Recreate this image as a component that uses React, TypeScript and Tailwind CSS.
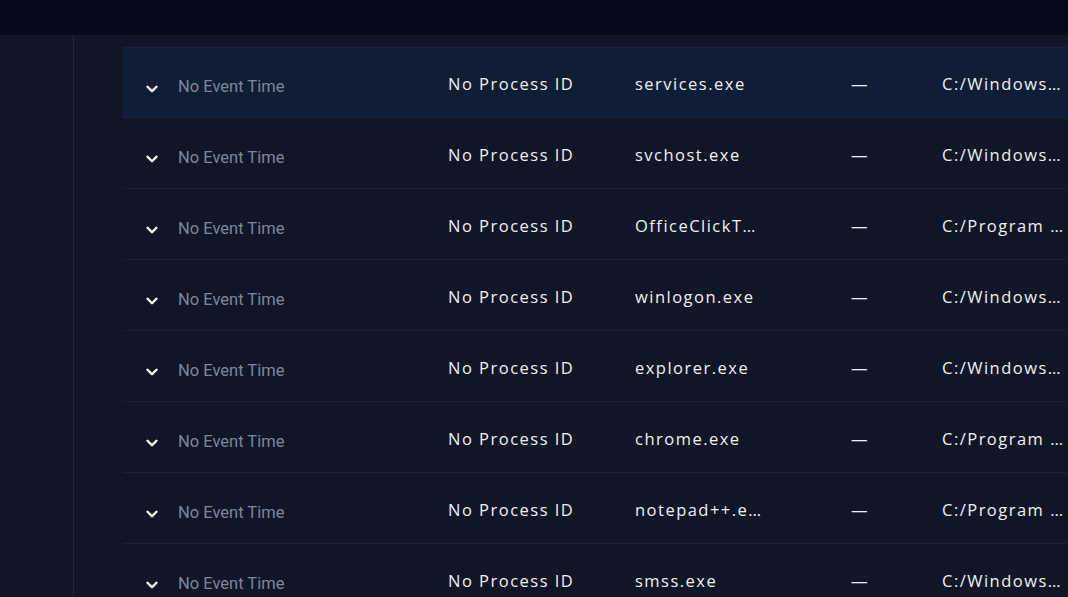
import { ChevronDown } from "lucide-react";

const rows = [
  { name: "services.exe", path: "C:/Windows/System32/services.exe" },
  { name: "svchost.exe", path: "C:/Windows/System32/svchost.exe" },
  { name: "OfficeClickToRun.exe", path: "C:/Program Files/Common Files/OfficeClickToRun.exe" },
  { name: "winlogon.exe", path: "C:/Windows/System32/winlogon.exe" },
  { name: "explorer.exe", path: "C:/Windows/explorer.exe" },
  { name: "chrome.exe", path: "C:/Program Files/Google/Chrome/chrome.exe" },
  { name: "notepad++.exe", path: "C:/Program Files/Notepad++/notepad++.exe" },
  { name: "smss.exe", path: "C:/Windows/System32/smss.exe" },
];

const wide = "font-['Open_Sans',sans-serif] font-medium text-[16.5px] tracking-[0.09em] text-[#eef0f5]";

export default function App() {
  return (
    <div className="h-[597px] w-[1068px] overflow-hidden bg-[#0f1726] flex flex-col">
      {/* Top bar */}
      <div className="h-[35px] shrink-0 bg-[#060a19]" />

      <div className="flex flex-1 min-h-0">
        {/* Sidebar */}
        <aside className="w-[74px] shrink-0 border-r border-[#1e2940]" />

        {/* Table */}
        <main className="flex-1 pl-[49px] pt-[12px] overflow-hidden">
          <div className="w-[1000px]">
            {rows.map((r, i) => (
              <div
                key={r.name}
                className={`flex items-center h-[71px] pt-[4px] border-b border-[#1a2035] ${
                  i === 0 ? "bg-[#101e35] border-t border-t-[#17223a]" : ""
                }`}
              >
                <div className="w-[301px] shrink-0 flex items-center pl-[20px] pt-[8px]">
                  <ChevronDown className="w-[18px] h-[18px] text-white" strokeWidth={3.2} />
                  <span className="ml-[17px] -mt-[2px] font-['Roboto',sans-serif] text-[16.5px] text-[#7d869c]">
                    No Event Time
                  </span>
                </div>
                <div className="w-[187px] shrink-0 pl-[24px]">
                  <span className={wide}>No Process ID</span>
                </div>
                <div className="w-[216px] shrink-0 pl-[24px]">
                  <div className={`${wide} max-w-[128px] truncate`}>{r.name}</div>
                </div>
                <div className="w-[91px] shrink-0 pl-[24px]">
                  <span className={wide}>—</span>
                </div>
                <div className="flex-1 pl-[24px]">
                  <div className={`${wide} max-w-[125px] truncate`}>{r.path}</div>
                </div>
              </div>
            ))}
          </div>
        </main>
      </div>
    </div>
  );
}
